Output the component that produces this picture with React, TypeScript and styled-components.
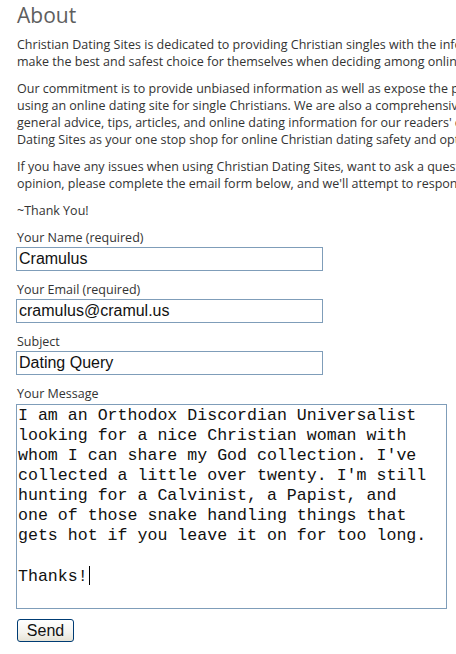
import React from "react";
import styled, { createGlobalStyle } from "styled-components";

const GlobalStyle = createGlobalStyle`
  html, body {
    margin: 0;
    padding: 0;
    background: #ffffff;
  }
  body {
    width: 456px;
    height: 654px;
    overflow: hidden;
  }
`;

const Page = styled.main`
  padding: 1px 0 0 17px;
  font-family: "Open Sans", "Liberation Sans", sans-serif;
  color: #333333;
  width: 900px;
`;

const Heading = styled.h2`
  margin: 0 0 7px 0;
  font-size: 21px;
  font-weight: 400;
  line-height: normal;
  color: #5e5e5e;
`;

const Paragraph = styled.p`
  margin: 0 0 10px 0;
  font-size: 12.5px;
  line-height: 17px;
  white-space: pre;
`;

const Form = styled.form`
  display: flex;
  flex-direction: column;
  align-items: flex-start;
  margin-left: -1px;
`;

const Field = styled.label<{ $gap?: number }>`
  display: flex;
  flex-direction: column;
  align-items: flex-start;
  margin-bottom: ${(p) => p.$gap ?? 11}px;
`;

const LabelText = styled.span`
  font-size: 12.5px;
  line-height: 17px;
  color: #333333;
  padding-left: 1px;
`;

const TextInput = styled.input`
  box-sizing: border-box;
  width: 307px;
  height: 24px;
  margin: 1px 0 0 0;
  padding: 0 2px;
  border: 1px solid #7f9db9;
  border-radius: 0;
  background: #ffffff;
  font-family: "Liberation Sans", Arial, sans-serif;
  font-size: 16px;
  color: #111111;
  outline: none;
`;

const MessageBox = styled.div`
  box-sizing: border-box;
  width: 431px;
  height: 205px;
  margin-top: 2px;
  padding: 1px 1px;
  border: 1px solid #7f9db9;
  background: #ffffff;
  font-family: "Liberation Mono", "Courier New", monospace;
  font-size: 16.6px;
  line-height: 20px;
  color: #111111;
  white-space: pre;
  overflow: hidden;
`;

const Caret = styled.span`
  display: inline-block;
  width: 1px;
  height: 19px;
  background: #000000;
  vertical-align: -4px;
  margin-left: 1px;
`;

const SendButton = styled.button`
  box-sizing: border-box;
  width: 57px;
  height: 23px;
  margin: 0 0 0 1px;
  padding: 0;
  border: 1px solid #003c74;
  border-radius: 3px;
  background: linear-gradient(#ffffff 0%, #f4f3ee 60%, #e6e3d6 100%);
  font-family: "Liberation Sans", Arial, sans-serif;
  font-size: 16px;
  color: #111111;
  line-height: 21px;
`;

const message = `I am an Orthodox Discordian Universalist
looking for a nice Christian woman with
whom I can share my God collection. I've
collected a little over twenty. I'm still
hunting for a Calvinist, a Papist, and
one of those snake handling things that
gets hot if you leave it on for too long.

Thanks!`;

export default function App() {
  return (
    <>
      <GlobalStyle />
      <Page>
        <Heading>About</Heading>
        <Paragraph>
          {`Christian Dating Sites is dedicated to providing Christian singles with the information they need to
make the best and safest choice for themselves when deciding among online Christian dating sites.`}
        </Paragraph>
        <Paragraph>
          {`Our commitment is to provide unbiased information as well as expose the pitfalls and dangers of
using an online dating site for single Christians. We are also a comprehensive resource for
general advice, tips, articles, and online dating information for our readers' convenience. Consider Christian
Dating Sites as your one stop shop for online Christian dating safety and options.`}
        </Paragraph>
        <Paragraph>
          {`If you have any issues when using Christian Dating Sites, want to ask a question, or just want to give us your
opinion, please complete the email form below, and we'll attempt to respond as quickly as possible.`}
        </Paragraph>
        <Paragraph>~Thank You!</Paragraph>
        <Form onSubmit={(e) => e.preventDefault()}>
          <Field $gap={10}>
            <LabelText>Your Name (required)</LabelText>
            <TextInput type="text" defaultValue="Cramulus" />
          </Field>
          <Field $gap={10}>
            <LabelText>Your Email (required)</LabelText>
            <TextInput type="text" defaultValue="cramulus@cramul.us" />
          </Field>
          <Field $gap={10}>
            <LabelText>Subject</LabelText>
            <TextInput type="text" defaultValue="Dating Query" />
          </Field>
          <Field $gap={10}>
            <LabelText>Your Message</LabelText>
            <MessageBox role="textbox" aria-multiline="true">
              {message}
              <Caret />
            </MessageBox>
          </Field>
          <SendButton type="submit">Send</SendButton>
        </Form>
      </Page>
    </>
  );
}
